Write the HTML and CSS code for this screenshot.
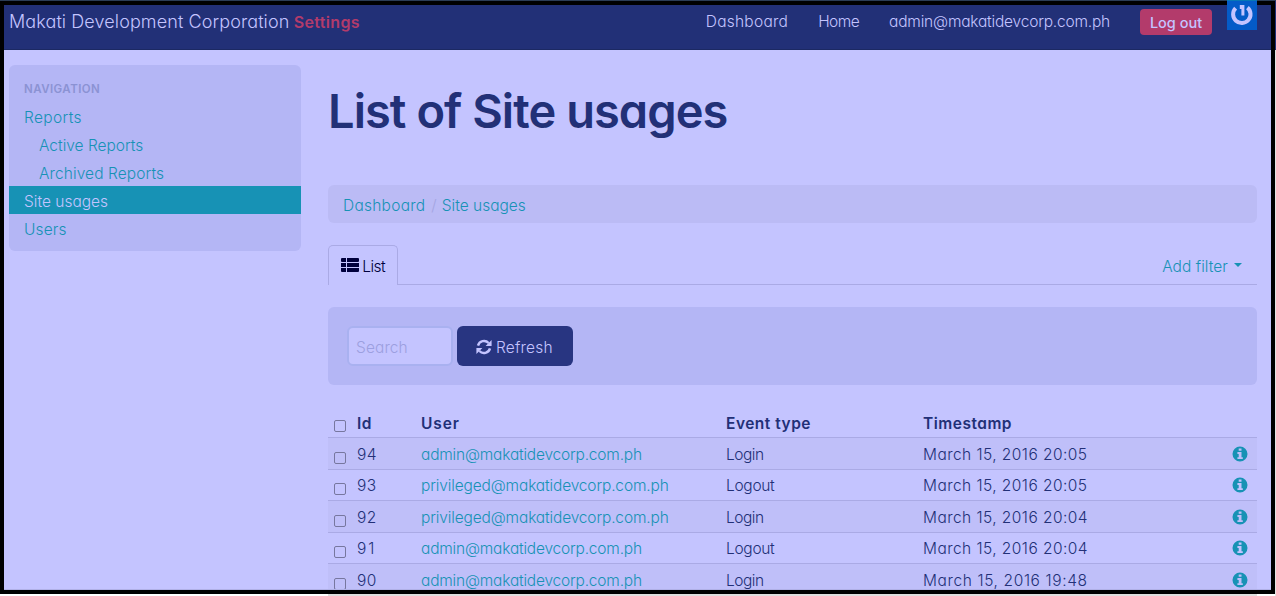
FILE: index.html
```
<!DOCTYPE html>
<html lang="en">
<head>
    <meta charset="UTF-8">
    <title>List of Site usages</title>
    <link rel="stylesheet" href="styles.css">
</head>
<body>
    <svg class="sprite">
        <symbol id="info" viewBox="0 0 16 16">
            <path fill-rule="evenodd" d="M8 .5a7.5 7.5 0 1 0 0 15a7.5 7.5 0 0 0 0-15zM6.7 2.4h2.8v2.4H6.7zM5.4 6h4.1v5.2h1.3v1.9H5.4v-1.9h1.3V7.9H5.4z"/>
        </symbol>
    </svg>

    <header class="navbar">
        <div class="brand"><span class="brand-name">Makati Development Corporation</span> <small class="brand-label">Settings</small></div>
        <nav class="top-nav">
            <a class="t-dashboard" href="#">Dashboard</a>
            <a class="t-home" href="#">Home</a>
            <a class="email-admin" href="#">admin@makatidevcorp.com.ph</a>
            <a class="logout" href="#"><span>Log out</span></a>
            <svg class="avatar" width="30" height="30" viewBox="0 0 30 30">
                <rect width="30" height="30" fill="#045bc8"/>
                <rect width="30" height="1" fill="#0878b4"/>
                <path d="M8.6 8.2A8.7 8.7 0 1 0 20.4 7.6" fill="none" stroke="#c4c4ff" stroke-width="4"/>
                <path d="M12.8 5h4.6v10.5h-3V9h-1.6z" fill="#c4c4ff"/>
            </svg>
        </nav>
    </header>

    <div class="page">
        <aside class="sidebar">
            <ul class="side-nav">
                <li class="side-header"><span>NAVIGATION</span></li>
                <li><a class="t-reports" href="#">Reports</a></li>
                <li class="sub"><a class="t-active" href="#">Active Reports</a></li>
                <li class="sub"><a class="t-archived" href="#">Archived Reports</a></li>
                <li class="active"><a href="#">Site usages</a></li>
                <li><a class="t-users" href="#">Users</a></li>
            </ul>
        </aside>

        <main class="content">
            <h1>List of Site usages</h1>

            <div class="breadcrumb">
                <a class="t-dashboard" href="#">Dashboard</a>
                <span class="divider">/</span>
                <a href="#">Site usages</a>
            </div>

            <div class="tabs">
                <a class="tab" href="#">
                    <svg width="18" height="14" viewBox="0 0 18 14">
                        <path d="M1 0h4v4H1a1 1 0 0 1-1-1V1a1 1 0 0 1 1-1zM6 0h11a1 1 0 0 1 1 1v2a1 1 0 0 1-1 1H6zM0 5h5v4H0zM6 5h12v4H6zM0 10h5v4H1a1 1 0 0 1-1-1zM6 10h12v3a1 1 0 0 1-1 1H6z" fill="#00003c"/>
                    </svg>
                    <span class="t-list">List</span>
                </a>
                <a class="filter" href="#"><span class="t-filter">Add filter</span><i class="caret"></i></a>
            </div>

            <form class="well">
                <input class="search" type="text" placeholder="Search">
                <button class="refresh" type="button">
                    <svg width="16" height="16" viewBox="0 0 16 16">
                        <path d="M2 6.6A6.2 6.2 0 0 1 12.6 4M14 9.4A6.2 6.2 0 0 1 3.4 12" fill="none" stroke="#c4c4ff" stroke-width="2.4"/>
                        <path d="M15.6 1v6H9.6zM.4 15V9h6z" fill="#c4c4ff"/>
                    </svg>
                    <span class="t-refresh">Refresh</span>
                </button>
            </form>

            <table class="table">
                <thead>
                    <tr>
                        <th class="c-check"><i class="check"></i></th>
                        <th class="c-id">Id</th>
                        <th class="c-user"><span class="t-user">User</span></th>
                        <th class="c-event">Event type</th>
                        <th class="c-time">Timestamp</th>
                        <th></th>
                    </tr>
                </thead>
                <tbody>
                    <tr>
                        <td><i class="check"></i></td>
                        <td><span class="t-id">94</span></td>
                        <td><a class="email-admin" href="#">admin@makatidevcorp.com.ph</a></td>
                        <td><span class="t-login">Login</span></td>
                        <td><span class="t-date">March 15, 2016 20:05</span></td>
                        <td class="c-info"><svg class="info"><use href="#info"/></svg></td>
                    </tr>
                    <tr>
                        <td><i class="check"></i></td>
                        <td><span class="t-id">93</span></td>
                        <td><a class="email-priv" href="#">privileged@makatidevcorp.com.ph</a></td>
                        <td><span class="t-logout">Logout</span></td>
                        <td><span class="t-date">March 15, 2016 20:05</span></td>
                        <td class="c-info"><svg class="info"><use href="#info"/></svg></td>
                    </tr>
                    <tr>
                        <td><i class="check"></i></td>
                        <td><span class="t-id">92</span></td>
                        <td><a class="email-priv" href="#">privileged@makatidevcorp.com.ph</a></td>
                        <td><span class="t-login">Login</span></td>
                        <td><span class="t-date">March 15, 2016 20:04</span></td>
                        <td class="c-info"><svg class="info"><use href="#info"/></svg></td>
                    </tr>
                    <tr>
                        <td><i class="check"></i></td>
                        <td><span class="t-id t-id-wide">91</span></td>
                        <td><a class="email-admin" href="#">admin@makatidevcorp.com.ph</a></td>
                        <td><span class="t-logout">Logout</span></td>
                        <td><span class="t-date">March 15, 2016 20:04</span></td>
                        <td class="c-info"><svg class="info"><use href="#info"/></svg></td>
                    </tr>
                    <tr>
                        <td><i class="check"></i></td>
                        <td><span class="t-id">90</span></td>
                        <td><a class="email-admin" href="#">admin@makatidevcorp.com.ph</a></td>
                        <td><span class="t-login">Login</span></td>
                        <td><span class="t-date t-date-wide">March 15, 2016 19:48</span></td>
                        <td class="c-info"><svg class="info"><use href="#info"/></svg></td>
                    </tr>
                </tbody>
            </table>
        </main>
    </div>

    <div class="frame"></div>
</body>
</html>
```
FILE: styles.css
```
* {
    box-sizing: border-box;
}

body {
    position: relative;
    height: 596px;
    margin: 0;
    overflow: hidden;
    background-color: #c4c4ff;
    color: #223077;
    font-family: Inter, "Liberation Sans", sans-serif;
    font-feature-settings: "cv11";
    font-size: 15.5px;
    font-weight: 360;
    line-height: 22px;
}

a {
    color: #1792b5;
    text-decoration: none;
}

.sprite {
    display: none;
}

/* top bar */
.navbar {
    display: flex;
    justify-content: space-between;
    height: 50px;
    padding: 0 19px 0 9px;
    background-color: #223077;
    border-bottom: 1px solid #1c2963;
}

.brand {
    padding-top: 11px;
    color: #c4c4ff;
}

.brand-name {
    font-size: 18px;
    letter-spacing: 0.1px;
}

.brand-label {
    color: #b33b6b;
    font-size: 16px;
    font-weight: 600;
    letter-spacing: 0.35px;
}

.top-nav {
    display: flex;
}

.top-nav a {
    margin-top: 11px;
    margin-right: 30px;
    color: #c4c4ff;
}

.top-nav .logout {
    width: 72px;
    height: 26px;
    margin-top: 9px;
    margin-right: 15px;
    border-radius: 4px;
    background-color: #b33b6b;
    font-size: 14.5px;
    font-weight: 550;
    line-height: 27px;
    text-align: center;
}

.avatar {
    position: relative;
    z-index: 2;
}

/* text widths */
.t-dashboard { letter-spacing: 0.25px; }
.t-home { letter-spacing: -0.55px; }
.email-admin { letter-spacing: -0.2px; }
.email-priv { letter-spacing: -0.15px; }
.t-reports { letter-spacing: 0.35px; }
.t-archived { letter-spacing: 0.1px; }
.t-users { letter-spacing: 0.15px; }
.t-list { letter-spacing: -0.6px; margin-left: -1px; }
.t-filter { letter-spacing: 0.05px; }
.t-refresh { letter-spacing: 0.2px; }
.t-user { letter-spacing: 0.9px; }
.t-id { letter-spacing: 0.5px; }
.t-id-wide { letter-spacing: 2px; }
.t-login { letter-spacing: -0.5px; }
.t-logout { letter-spacing: -0.3px; }
.t-date { letter-spacing: 0.45px; }
.t-date-wide { letter-spacing: 0.62px; }

.page {
    display: flex;
    padding: 15px 19px 0 9px;
}

/* sidebar */
.sidebar {
    width: 292px;
    margin-right: 27px;
}

.side-nav {
    height: 186px;
    margin: 0;
    padding: 10px 0 0;
    border-radius: 6px;
    background-color: #b4b6f5;
    list-style: none;
}

.side-nav li {
    height: 28px;
    padding-left: 15px;
    line-height: 31px;
}

.side-nav .side-header {
    height: 27px;
    color: #8b92d3;
    font-size: 11.5px;
    font-weight: 600;
    letter-spacing: 0.45px;
    line-height: 28px;
}

.side-nav .sub {
    padding-left: 30px;
}

.side-nav .active {
    background-color: #1792b5;
}

.side-nav .active a {
    color: #c4c4ff;
}

/* main column */
.content {
    flex: 1;
}

h1 {
    height: 50px;
    margin: 20px 0 50px;
    font-size: 47px;
    font-weight: 580;
    letter-spacing: -0.95px;
    line-height: 52px;
}

.breadcrumb {
    display: flex;
    height: 38px;
    padding: 10px 15px;
    border-radius: 6px;
    background-color: #bbbbf5;
}

.divider {
    margin: 0 5px 0 6px;
    color: #a3a5e2;
}

.tabs {
    display: flex;
    justify-content: space-between;
    height: 40px;
    margin-top: 22px;
    border-bottom: 1px solid #aaaae5;
}

.tab {
    width: 70px;
    height: 40px;
    padding: 10px 0 0 12px;
    border: 1px solid #aaaae5;
    border-bottom: 0;
    border-radius: 5px 5px 0 0;
    background-color: #c4c4ff;
    color: #00003c;
    white-space: nowrap;
}

.filter {
    display: flex;
    padding: 11px 15px 0 0;
}

.caret {
    width: 8px;
    height: 4px;
    margin: 7px 0 0 6px;
    background-color: #1792b5;
    clip-path: polygon(0 0, 100% 0, 50% 100%);
}

.well {
    display: flex;
    height: 78px;
    margin: 22px 0 20px;
    padding: 19px;
    border-radius: 6px;
    background-color: #b4b6f5;
}

.search {
    width: 106px;
    height: 40px;
    margin: 0 4px 0 0;
    padding: 2px 7px 0;
    border: 2px solid #a9b1f0;
    border-radius: 6px;
    background-color: #c4c4ff;
    font: inherit;
    letter-spacing: 0.1px;
}

.search::placeholder {
    color: #9c9fe0;
}

.refresh {
    display: flex;
    align-items: center;
    gap: 4px;
    width: 116px;
    height: 40px;
    padding: 3px 0 0 19px;
    border: 0;
    border-radius: 6px;
    background-color: #283581;
    color: #c4c4ff;
    font: inherit;
}

.refresh svg {
    margin-top: -2px;
}

/* usage table */
.table {
    width: 100%;
    table-layout: fixed;
    border-collapse: collapse;
}

.table th,
.table td {
    height: 31.5px;
    padding: 3px 5px 0;
    border-bottom: 1px solid #aaaae5;
    text-align: left;
    white-space: nowrap;
}

.table th {
    height: 32.5px;
    padding-top: 5px;
    font-weight: 570;
    letter-spacing: 0.5px;
}

.table tbody tr:nth-child(odd) {
    background-color: #bfbff9;
}

.c-check { width: 24px; }
.c-id { width: 64px; }
.c-user { width: 305px; }
.c-event { width: 197px; }

.check {
    display: block;
    width: 12px;
    height: 12px;
    margin: 6px 0 0 1px;
    border: 1px solid #77779f;
    border-radius: 2px;
}

th .check {
    margin-top: 4px;
}

.table .c-info {
    padding-top: 1px;
}

.info {
    display: block;
    width: 16px;
    height: 16px;
    margin: 0 4px 0 auto;
    fill: #1792b5;
}

/* dark border drawn over the whole window */
.frame {
    position: absolute;
    inset: 0 1px 2px 0;
    border: solid #000;
    border-width: 5px 4px 4px;
    box-shadow: inset 0 -1px 0 #b0b0e6;
}

.frame::before {
    content: "";
    position: absolute;
    top: -5px;
    left: -4px;
    right: -5px;
    height: 1px;
    background-color: #2b3c55;
}

.frame::after {
    content: "";
    position: absolute;
    top: 45px;
    bottom: -6px;
    left: -4px;
    right: -5px;
    background:
        linear-gradient(#e4e4e4, #e4e4e4) right top / 1px 100% no-repeat,
        linear-gradient(to right, #fff 328px, #dedede 328px, #dedede 1257px, #fff 1257px) left bottom / 100% 2px no-repeat;
}
```
